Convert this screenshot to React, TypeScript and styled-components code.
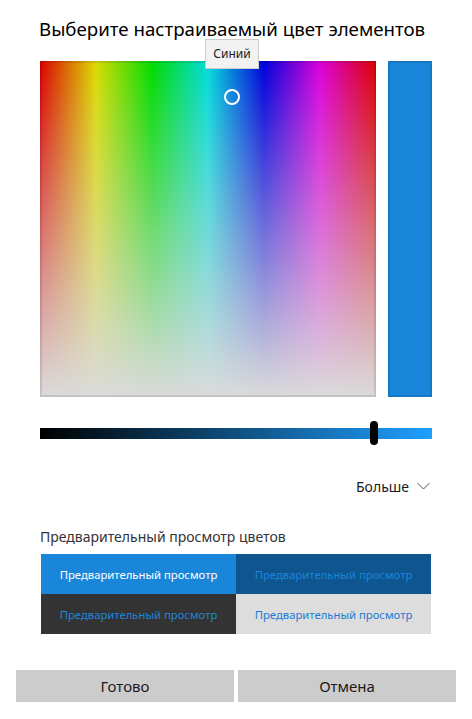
import React from "react";
import styled, { createGlobalStyle } from "styled-components";

const Global = createGlobalStyle`
  html, body { margin: 0; padding: 0; background: #ffffff; }
  body { font-family: "Noto Sans", "Open Sans", sans-serif; color: #1a1a1a; }
  * { box-sizing: border-box; }
`;

const Page = styled.div`
  width: 472px;
  height: 719px;
  background: #ffffff;
  display: flex;
  flex-direction: column;
`;

const Content = styled.div`
  padding: 0 40px;
  display: flex;
  flex-direction: column;
`;

const Title = styled.h1`
  margin: 15px 0 0 -1px;
  font-size: 18.7px;
  line-height: 28px;
  font-weight: 400;
  color: #000;
  white-space: nowrap;
`;

const PickerRow = styled.div`
  margin-top: 18px;
  display: flex;
  gap: 12px;
  height: 336px;
`;

const Spectrum = styled.div`
  position: relative;
  width: 336px;
  height: 336px;
  background:
    linear-gradient(to bottom, rgba(219, 219, 219, 0), rgb(219, 219, 219)),
    linear-gradient(
      to right,
      rgb(219, 0, 0),
      rgb(219, 219, 0),
      rgb(0, 219, 0),
      rgb(0, 219, 219),
      rgb(0, 0, 219),
      rgb(219, 0, 219),
      rgb(219, 0, 0)
    );
`;

const SpectrumFrame = styled.div`
  position: absolute;
  inset: 0;
  border: 2px solid rgba(0, 0, 0, 0.1);
  pointer-events: none;
`;

const Marker = styled.div`
  position: absolute;
  width: 16px;
  height: 16px;
  border-radius: 50%;
  border: 2px solid #ffffff;
  transform: translate(-50%, -50%);
`;

const Tooltip = styled.div`
  position: absolute;
  left: 165px;
  top: -22px;
  width: 54px;
  height: 30px;
  background: #f2f2f2;
  border: 1px solid #cccccc;
  font-size: 12px;
  line-height: 28px;
  text-align: center;
  color: #1a1a1a;
`;

const Swatch = styled.div<{ $color: string }>`
  flex: 1;
  background: ${(p) => p.$color};
  border: 2px solid rgba(0, 0, 0, 0.1);
`;

const Slider = styled.div`
  position: relative;
  margin-top: 24px;
  height: 24px;
  display: flex;
  align-items: center;
`;

const Track = styled.div<{ $to: string }>`
  width: 100%;
  height: 11px;
  background: linear-gradient(to right, #000000, ${(p) => p.$to});
`;

const Thumb = styled.div`
  position: absolute;
  top: 0;
  width: 8px;
  height: 24px;
  border-radius: 4px;
  background: #000000;
  transform: translateX(-50%);
`;

const MoreRow = styled.div`
  margin-top: 26px;
  height: 30px;
  display: flex;
  justify-content: flex-end;
  align-items: center;
  gap: 8px;
  padding-right: 2px;
`;

const MoreText = styled.span`
  font-size: 14px;
  color: #1a1a1a;
`;

const SectionLabel = styled.div`
  margin-top: 26px;
  font-size: 14px;
  line-height: 20px;
  color: #333333;
`;

const PreviewGrid = styled.div`
  margin: 7px 1px 0;
  display: grid;
  grid-template-columns: 1fr 1fr;
  grid-auto-rows: 40px;
`;

const PreviewCell = styled.div<{ $bg: string; $fg: string }>`
  background: ${(p) => p.$bg};
  color: ${(p) => p.$fg};
  font-size: 11.3px;
  display: flex;
  align-items: center;
  justify-content: center;
`;

const Footer = styled.div`
  margin-top: 36px;
  padding: 0 16px;
  display: grid;
  grid-template-columns: 1fr 1fr;
  gap: 4px;
`;

const Button = styled.button`
  height: 32px;
  border: none;
  background: #cccccc;
  font-family: inherit;
  font-size: 15px;
  color: #1a1a1a;
  padding: 0;
`;

const Chevron = () => (
  <svg width="13" height="8" viewBox="0 0 13 8" fill="none">
    <polyline points="0.5,1 6.5,7 12.5,1" stroke="#555" strokeWidth="1" />
  </svg>
);

const accent = "#1a86d9";

const previews = [
  { bg: accent, fg: "#ffffff" },
  { bg: "#0f558f", fg: "#1a86d9" },
  { bg: "#333333", fg: "#1a86d9" },
  { bg: "#dddddd", fg: "#1a7cd3" },
];

export default function App() {
  return (
    <Page>
      <Global />
      <Content>
        <Title>Выберите настраиваемый цвет элементов</Title>
        <PickerRow>
          <Spectrum>
            <SpectrumFrame />
            <Marker style={{ left: 192, top: 36 }} />
            <Tooltip>Синий</Tooltip>
          </Spectrum>
          <Swatch $color={accent} />
        </PickerRow>
        <Slider>
          <Track $to="#1f9fff" />
          <Thumb style={{ left: 334 }} />
        </Slider>
        <MoreRow>
          <MoreText>Больше</MoreText>
          <Chevron />
        </MoreRow>
        <SectionLabel>Предварительный просмотр цветов</SectionLabel>
        <PreviewGrid>
          {previews.map((p, i) => (
            <PreviewCell key={i} $bg={p.bg} $fg={p.fg}>
              Предварительный просмотр
            </PreviewCell>
          ))}
        </PreviewGrid>
      </Content>
      <Footer>
        <Button>Готово</Button>
        <Button>Отмена</Button>
      </Footer>
    </Page>
  );
}
